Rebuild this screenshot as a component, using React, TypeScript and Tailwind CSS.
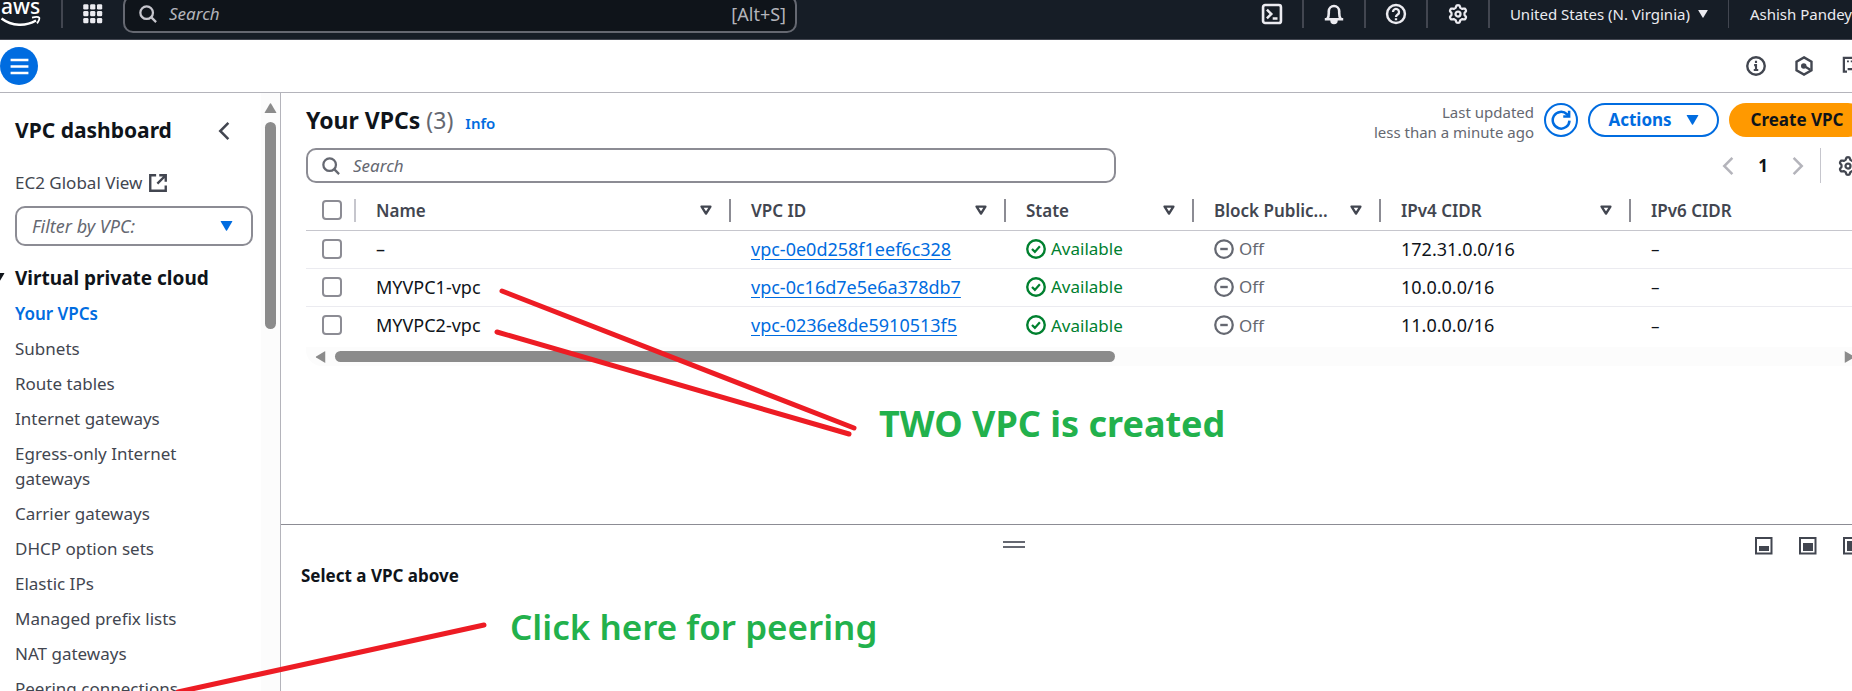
import type { ReactNode } from 'react'

const vpcs = [
  { name: '–', id: 'vpc-0e0d258f1eef6c328', cidr: '172.31.0.0/16' },
  { name: 'MYVPC1-vpc', id: 'vpc-0c16d7e5e6a378db7', cidr: '10.0.0.0/16' },
  { name: 'MYVPC2-vpc', id: 'vpc-0236e8de5910513f5', cidr: '11.0.0.0/16' },
]

const navItems = [
  'Your VPCs',
  'Subnets',
  'Route tables',
  'Internet gateways',
  'Egress-only Internet gateways',
  'Carrier gateways',
  'DHCP option sets',
  'Elastic IPs',
  'Managed prefix lists',
  'NAT gateways',
  'Peering connections',
]

function Icon({ children, className = 'size-5' }: { children: ReactNode; className?: string }) {
  return (
    <svg
      viewBox="0 0 16 16"
      className={`shrink-0 ${className}`}
      fill="none"
      stroke="currentColor"
      strokeWidth="2"
      aria-hidden="true"
    >
      {children}
    </svg>
  )
}

const gearPoints = Array.from({ length: 72 }, (_, i) => {
  const a = (i / 72) * Math.PI * 2
  const r = 6.1 + 0.95 * Math.tanh(2 * Math.cos(6 * a))
  return `${(8 + r * Math.sin(a)).toFixed(2)},${(8 - r * Math.cos(a)).toFixed(2)}`
}).join(' ')

function GearIcon() {
  return (
    <Icon>
      <polygon points={gearPoints} strokeWidth="1.8" strokeLinejoin="round" />
      <circle cx="8" cy="8" r="2" strokeWidth="1.8" />
    </Icon>
  )
}

function SearchIcon({ className }: { className: string }) {
  return (
    <Icon className={className}>
      <circle cx="6.8" cy="6.8" r="5.6" />
      <path d="M10.8 10.8 15.2 15.2" />
    </Icon>
  )
}

function Caret({ className }: { className: string }) {
  return (
    <svg viewBox="0 0 12 10" className={`shrink-0 ${className}`} fill="currentColor" aria-hidden="true">
      <path d="M.6 0h10.8q.7 0 .4.6L6.5 9.4q-.5.8-1 0L.2.6Q0 0 .6 0Z" />
    </svg>
  )
}

function SortIcon() {
  return (
    <svg viewBox="0 0 12 11" className="w-3 h-[11px] shrink-0" fill="none" stroke="currentColor" strokeWidth="2.4" aria-hidden="true">
      <path d="M1.6 1.6h8.8L6 8.6Z" strokeLinejoin="round" />
    </svg>
  )
}

function AwsLogo() {
  return (
    <svg viewBox="0 0 41 28" className="w-[41px] h-7" fill="none" stroke="#fff" aria-hidden="true">
      <text x="1" y="14" fill="#fff" stroke="none" className="font-['Noto_Sans'] text-[21px] font-medium">
        aws
      </text>
      <path d="M1.500 18.500C12 26.500 26 26.500 36 20.500" strokeWidth="2.4" />
      <path d="M32 17.600q6-1.600 7.300.2q.5 2-2.300 5.600" strokeWidth="1.8" />
    </svg>
  )
}

function Checkbox({ label }: { label: string }) {
  return (
    <input
      type="checkbox"
      aria-label={label}
      className="block size-5 appearance-none rounded-[4px] border-2 border-[#8c8c94] bg-white checked:bg-[#006ce0]"
    />
  )
}

function HeaderButton({ label, children }: { label: string; children: ReactNode }) {
  return (
    <button aria-label={label} className="flex w-[62px] items-center justify-center border-r-2 border-[#424650]">
      {children}
    </button>
  )
}

function TopBar() {
  return (
    <header className="shrink-0 border-b border-[#424650] bg-[#161d26] text-[#ebebf0]">
      <div className="flex h-7 mb-[11px]">
        <a href="#home" aria-label="AWS home" className="w-[61px]">
          <AwsLogo />
        </a>
        <button aria-label="Services" className="flex items-center border-l-2 border-[#424650] px-[19px]">
          <Icon className="size-[22px]">
            {[3, 8, 13].map((y) =>
              [3, 8, 13].map((x) => (
                <rect key={`${x}-${y}`} x={x - 2.1} y={y - 2.1} width="3.800" height="3.800" rx=".9" fill="currentColor" stroke="none" />
              )),
            )}
          </Icon>
        </button>
        <label className="flex h-[38px] w-[674px] items-center self-center rounded-[10px] border-2 border-[#656871] bg-[#0f141a] pr-[9px] pl-[14px]">
          <SearchIcon className="size-[18px] text-[#c6c6cd]" />
          <input
            aria-label="Search services"
            placeholder="Search"
            className="ml-3 min-w-0 flex-1 bg-transparent text-[17px] italic outline-none placeholder:text-[#b4b4bb]"
          />
          <span className="text-lg text-[#b4b4bb]">[Alt+S]</span>
        </label>
        <div className="-mr-[18px] ml-auto flex shrink-0">
          <HeaderButton label="CloudShell">
            <Icon className="size-[22px]">
              <rect x="1.500" y="1.500" width="13" height="13" rx="1.500" strokeWidth="1.900" />
              <path d="m4.300 4.800 3.200 3.200-3.200 3.200M8.500 11.200h3.500" strokeWidth="1.800" />
            </Icon>
          </HeaderButton>
          <HeaderButton label="Notifications">
            <Icon className="size-[22px]">
              <path d="M1.300 11.800h13.400M3.100 11.500C4.500 10 4.200 8.500 4.200 6a3.800 3.800 0 0 1 7.600 0c0 2.500-.3 4 1.100 5.500" strokeWidth="1.900" />
              <path d="M6 12.800h4a2 2 0 0 1-4 0Z" strokeWidth="1.400" fill="currentColor" />
            </Icon>
          </HeaderButton>
          <HeaderButton label="Help">
            <Icon className="size-[22px]">
              <circle cx="8" cy="8" r="6.500" strokeWidth="1.800" />
              <path d="M5.800 6.500a2.200 2.200 0 1 1 3.600 1.700C8.400 8.900 8 9 8 10.200M8 11v1.500" strokeWidth="1.700" />
            </Icon>
          </HeaderButton>
          <HeaderButton label="Settings">
            <GearIcon />
          </HeaderButton>
          <button className="flex items-center gap-2 border-r border-[#424650] px-5 text-[15px] whitespace-nowrap">
            United States (N. Virginia)
            <Caret className="h-2 w-[10px]" />
          </button>
          <button className="flex items-center gap-2 pl-[21px] text-[15px] whitespace-nowrap">
            Ashish Pandey
            <Caret className="h-2 w-[10px]" />
          </button>
        </div>
      </div>
    </header>
  )
}

function ToolBar() {
  return (
    <div className="flex h-[53px] shrink-0 items-center border-b border-[#b4b4bb] text-[#424650]">
      <button aria-label="Toggle navigation" className="flex size-[38px] items-center justify-center rounded-full bg-[#006ce0] text-white">
        <Icon className="size-[19px]">
          <path d="M.5 2.500h15M.5 8h15M.5 13.500h15" />
        </Icon>
      </button>
      <div className="-mr-[10px] ml-auto flex shrink-0 gap-7">
        <button aria-label="Information">
          <Icon>
            <circle cx="8" cy="8" r="7" strokeWidth="1.900" />
            <path d="M8 3.800v1.800M6.500 7.300H8v3.800M6.200 11.200h3.600" strokeWidth="1.700" />
          </Icon>
        </button>
        <button aria-label="Insights">
          <Icon>
            <path d="M8 1.100 14 4.500v7L8 14.900 2 11.500v-7Z" strokeWidth="1.900" />
            <circle cx="7.800" cy="8" r="2.200" fill="currentColor" stroke="none" />
            <path d="m8 8 5 3" strokeWidth="1.800" />
          </Icon>
        </button>
        <button aria-label="Open window">
          <Icon>
            <path d="M4 12.500H1.500V1.500h13v5" strokeWidth="1.800" />
            <path d="M4 4.300h1.500M7 4.300h1.500M10 4.300h1.500" strokeWidth="1.500" />
            <path d="M4.500 10.500h7M8.500 7l3 3.500-3 3.500" strokeWidth="1.800" />
          </Icon>
        </button>
      </div>
    </div>
  )
}

function SideBar() {
  return (
    <aside className="flex w-[281px] shrink-0 overflow-hidden border-r border-[#b4b4bb] text-[#424650]">
      <div className="min-w-0 flex-1 pl-[15px]">
        <div className="flex h-[75px] items-center justify-between pr-[27px]">
          <h2 className="text-[21px] font-bold text-[#0f141a]">VPC dashboard</h2>
          <button aria-label="Collapse navigation">
            <Icon>
              <path d="M11.500 1.500 5 8l6.500 6.500" />
            </Icon>
          </button>
        </div>
        <a href="#global" className="mt-[2px] flex h-[26px] items-center gap-[6px] text-[17px]">
          EC2 Global View
          <Icon>
            <path d="M6.500 1.800H1.800v12.400h12.400V10" strokeWidth="1.900" />
            <path d="M9 1.800h5.200V7M14 2 7.500 8.500" strokeWidth="1.900" />
          </Icon>
        </a>
        <div className="relative mt-[10px] mr-2 h-10">
          <select
            aria-label="Filter by VPC"
            className="h-full w-full appearance-none rounded-[10px] border-2 border-[#8c8c94] bg-white pl-[15px] text-lg text-[#656871] italic"
          >
            <option>Filter by VPC:</option>
          </select>
          <Caret className="pointer-events-none absolute top-[15px] right-5 h-[10px] w-[13px] text-[#006ce0]" />
        </div>
        <h3 className="mt-[19px] -ml-[25px] flex h-[26px] items-center gap-[10px] text-[19px] font-bold text-[#0f141a]">
          <Caret className="ml-[2px] h-[10px] w-[13px]" />
          Virtual private cloud
        </h3>
        <nav className="mt-[10px] flex flex-col gap-[10px] pr-12 text-[17px] leading-[25px]">
          {navItems.map((item, i) => (
            <a key={item} href={`#${i}`} className={i === 0 ? 'font-semibold text-[#006ce0]' : ''}>
              {item}
            </a>
          ))}
        </nav>
      </div>
      <div className="flex w-[19px] flex-col items-center bg-[#fcfcfc] text-[#8b8b8b]">
        <Caret className="mt-[10px] h-[10px] w-[13px] rotate-180" />
        <div className="mt-[9px] h-[207px] w-[11px] rounded-full bg-[#8b8b8b]" />
      </div>
    </aside>
  )
}

function ColumnHeader({ children, last = false }: { children: ReactNode; last?: boolean }) {
  return (
    <th className="p-0 pt-[8px] text-left font-semibold">
      <div className={`flex h-[23px] items-center justify-between pr-[17px] pl-5 ${last ? '' : 'border-r-2 border-[#8c8c94]'}`}>
        <span className="whitespace-nowrap">{children}</span>
        {!last && <SortIcon />}
      </div>
    </th>
  )
}

function VpcTable() {
  return (
    <table className="w-full table-fixed border-collapse text-[17px] text-[#0f141a]">
      <colgroup>
        <col className="w-[50px]" />
        <col className="w-[375px]" />
        <col className="w-[275px]" />
        <col className="w-[188px]" />
        <col className="w-[187px]" />
        <col className="w-[250px]" />
        <col />
      </colgroup>
      <thead className="text-[#424650]">
        <tr className="h-[47px] border-b border-[#c6c6cd]">
          <th className="p-0 pt-[8px]">
            <div className="flex h-[23px] items-center border-r-2 border-[#c6c6cd] pl-4">
              <Checkbox label="Select all VPCs" />
            </div>
          </th>
          <ColumnHeader>Name</ColumnHeader>
          <ColumnHeader>VPC ID</ColumnHeader>
          <ColumnHeader>State</ColumnHeader>
          <ColumnHeader>Block Public...</ColumnHeader>
          <ColumnHeader>IPv4 CIDR</ColumnHeader>
          <ColumnHeader last>IPv6 CIDR</ColumnHeader>
        </tr>
      </thead>
      <tbody>
        {vpcs.map((vpc) => (
          <tr key={vpc.id} className="h-[38px] border-b border-[#ebebf0] last:border-0">
            <td className="p-0 pl-4">
              <Checkbox label={`Select ${vpc.id}`} />
            </td>
            <td className="p-0 pl-5 text-lg">{vpc.name}</td>
            <td className="p-0 pl-5 text-lg">
              <a href={`#${vpc.id}`} className="text-[#006ce0] underline underline-offset-[3px]">
                {vpc.id}
              </a>
            </td>
            <td className="p-0 pl-5">
              <span className="flex items-center gap-[5px] text-[#00802f]">
                <Icon>
                  <circle cx="8" cy="8" r="7" strokeWidth="1.900" />
                  <path d="m4.800 8 2.300 2.300 4-4.500" strokeWidth="1.800" />
                </Icon>
                Available
              </span>
            </td>
            <td className="p-0 pl-5">
              <span className="flex items-center gap-[5px] text-[#656871]">
                <Icon>
                  <circle cx="8" cy="8" r="7" strokeWidth="1.800" />
                  <path d="M5 8h6" strokeWidth="1.900" />
                </Icon>
                Off
              </span>
            </td>
            <td className="p-0 pl-5 text-lg">{vpc.cidr}</td>
            <td className="p-0 pl-5">–</td>
          </tr>
        ))}
      </tbody>
    </table>
  )
}

function VpcList() {
  return (
    <section className="-mr-[13px] min-h-0 flex-1 pt-[10px] pl-[25px]">
      <div className="flex h-[34px] items-center">
        <h1 className="text-[23px] font-bold whitespace-nowrap text-[#0f141a]">
          Your VPCs <span className="font-normal text-[#656871]">(3)</span>
        </h1>
        <a href="#info" className="mt-[6px] ml-3 text-[15px] font-semibold text-[#006ce0]">
          Info
        </a>
        <div className="ml-auto flex shrink-0 items-center gap-[10px]">
          <p className="pt-1 text-right text-[15px] leading-5 text-[#656871]">
            Last updated
            <br />
            less than a minute ago
          </p>
          <button aria-label="Refresh" className="flex size-[34px] items-center justify-center rounded-full border-2 border-[#006ce0] text-[#006ce0]">
            <Icon>
              <path d="M14.800 8.500A6.700 6.700 0 1 1 12.800 3.400L14 4.600" />
              <path d="M14.500.5V5.200H9.800" />
            </Icon>
          </button>
          <button className="flex h-[34px] w-[131px] items-center justify-center gap-[14px] rounded-full border-2 border-[#006ce0] text-[17px] font-bold text-[#006ce0]">
            Actions
            <Caret className="h-[10px] w-[13px]" />
          </button>
          <button className="h-[34px] w-[136px] rounded-full bg-[#ff9900] text-[17px] font-bold whitespace-nowrap text-[#0f141a]">
            Create VPC
          </button>
        </div>
      </div>
      <div className="mt-[11px] flex h-[35px] items-center">
        <label className="flex h-full w-[810px] items-center rounded-[10px] border-2 border-[#8c8c94] pl-[14px] text-[#656871]">
          <SearchIcon className="size-[18px]" />
          <input
            aria-label="Search VPCs"
            placeholder="Search"
            className="ml-[13px] min-w-0 flex-1 bg-transparent text-[17px] italic outline-none placeholder:text-[#656871]"
          />
        </label>
        <div className="mr-[7px] ml-auto flex h-full shrink-0 items-center">
          <button aria-label="Previous page" className="text-[#b4b4bb]">
            <Icon>
              <path d="M11.500 1.500 5 8l6.500 6.500" />
            </Icon>
          </button>
          <span className="w-[50px] text-center text-[17px] font-bold text-[#0f141a]">1</span>
          <button aria-label="Next page" className="text-[#b4b4bb]">
            <Icon>
              <path d="M4.500 1.500 11 8l-6.500 6.500" />
            </Icon>
          </button>
          <div className="ml-[12px] h-full border-l border-[#c6c6cd]" />
          <button aria-label="Preferences" className="ml-[17px] text-[#424650]">
            <GearIcon />
          </button>
        </div>
      </div>
      <VpcTable />
      <div className="mt-[3px] flex h-[19px] items-center rounded-bl-2xl bg-[#fcfcfc] pr-[9px] pl-2 text-[#8b8b8b]">
        <Caret className="h-[10px] w-[13px] rotate-90" />
        <div className="ml-2 h-[11px] w-[780px] rounded-full bg-[#8b8b8b]" />
        <Caret className="ml-auto h-[10px] w-[13px] -rotate-90" />
      </div>
    </section>
  )
}

function PanelIcon({ y, height }: { y: number; height: number }) {
  return (
    <svg viewBox="0 0 18 18" className="size-[18px]" aria-hidden="true">
      <rect x="1" y="1" width="15.500" height="15.500" fill="none" stroke="currentColor" strokeWidth="2" />
      <rect x="4" y={y} width="10" height={height} fill="currentColor" />
    </svg>
  )
}

function SplitPanel() {
  return (
    <section className="h-[167px] shrink-0 border-t border-[#8c8c94] text-[#424650]">
      <div className="-mr-[9px] grid h-[38px] grid-cols-[1fr_auto_1fr] items-center">
        <span />
        <button aria-label="Resize panel" className="mr-[115px] h-[7px] w-[22px] border-y-2 border-[#656871]" />
        <div className="flex justify-end gap-[26px] pt-1">
          <button aria-label="Small panel">
            <PanelIcon y={9} height={5} />
          </button>
          <button aria-label="Medium panel">
            <PanelIcon y={6} height={8} />
          </button>
          <button aria-label="Large panel">
            <PanelIcon y={4} height={10} />
          </button>
        </div>
      </div>
      <h2 className="ml-5 text-[17px] font-bold text-[#0f141a]">Select a VPC above</h2>
    </section>
  )
}

function Annotations() {
  return (
    <div className="pointer-events-none absolute inset-0 overflow-hidden whitespace-nowrap text-[#22b14c]">
      <svg className="absolute inset-0 size-full" stroke="#ed1c24" strokeWidth="5" strokeLinecap="round" aria-hidden="true">
        <path d="M502 291 854 428M497 332 849 434M484 625 178 692" fill="none" />
      </svg>
      <p className="absolute top-[399px] left-[879px] text-[36px] leading-[50px] font-bold">TWO VPC is created</p>
      <p className="absolute top-[602px] left-[510px] text-[35px] leading-[50px] font-semibold">Click here for peering</p>
    </div>
  )
}

export default function App() {
  return (
    <div className="relative flex h-screen flex-col overflow-hidden bg-white font-['Noto_Sans','Open_Sans',sans-serif]">
      <TopBar />
      <ToolBar />
      <div className="flex min-h-0 flex-1">
        <SideBar />
        <main className="flex min-w-0 flex-1 flex-col overflow-hidden">
          <VpcList />
          <SplitPanel />
        </main>
      </div>
      <Annotations />
    </div>
  )
}
